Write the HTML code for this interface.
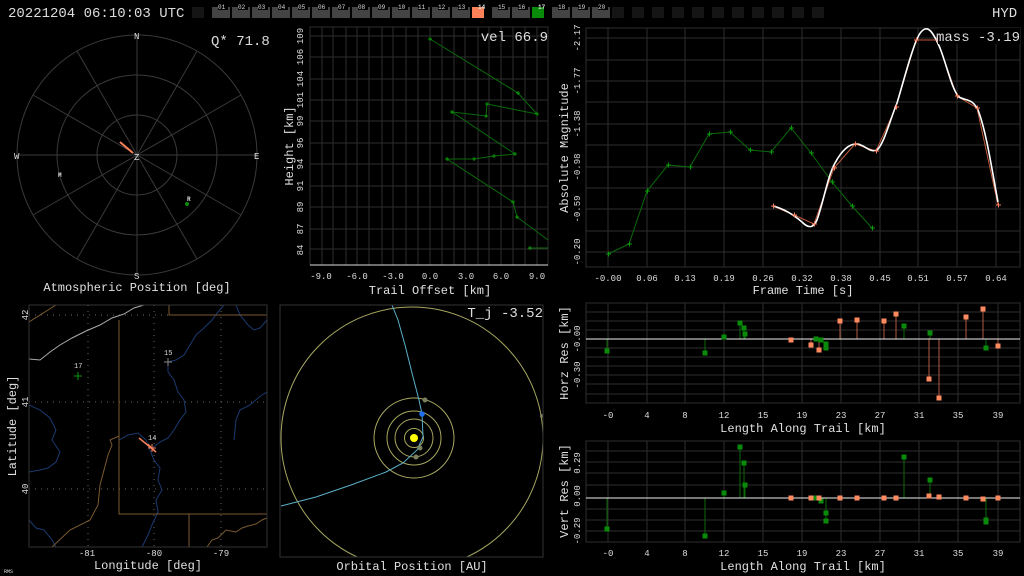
<!DOCTYPE html>
<html><head><meta charset="utf-8"><style>
html,body{margin:0;padding:0;background:#000;width:1024px;height:576px;overflow:hidden}
svg{display:block}
text{font-family:"Liberation Mono",monospace;fill:#ddd}
.t{font-size:9px;fill:#bbb}
.ax{font-size:12px;fill:#e0e0e0}
.g{stroke:#2e2e2e;stroke-width:1;fill:none}
</style></head><body>
<svg width="1024" height="576" viewBox="0 0 1024 576" xmlns="http://www.w3.org/2000/svg">
<rect width="1024" height="576" fill="#000"/>
<text x="8" y="17" font-size="14" fill="#e8e8e8">20221204 06:10:03 UTC</text>
<text x="992" y="17" font-size="14" fill="#e8e8e8">HYD</text>
<g id="boxes">
<rect x="192" y="7" width="12" height="11" fill="#151515"/>
<rect x="212" y="7" width="18" height="11" fill="#444"/><rect x="218" y="3" width="10" height="7" fill="#000"/><text x="218" y="9" font-size="6">01</text>
<rect x="232" y="7" width="18" height="11" fill="#444"/><rect x="238" y="3" width="10" height="7" fill="#000"/><text x="238" y="9" font-size="6">02</text>
<rect x="252" y="7" width="18" height="11" fill="#444"/><rect x="258" y="3" width="10" height="7" fill="#000"/><text x="258" y="9" font-size="6">03</text>
<rect x="272" y="7" width="18" height="11" fill="#444"/><rect x="278" y="3" width="10" height="7" fill="#000"/><text x="278" y="9" font-size="6">04</text>
<rect x="292" y="7" width="18" height="11" fill="#444"/><rect x="298" y="3" width="10" height="7" fill="#000"/><text x="298" y="9" font-size="6">05</text>
<rect x="312" y="7" width="18" height="11" fill="#444"/><rect x="318" y="3" width="10" height="7" fill="#000"/><text x="318" y="9" font-size="6">06</text>
<rect x="332" y="7" width="18" height="11" fill="#444"/><rect x="338" y="3" width="10" height="7" fill="#000"/><text x="338" y="9" font-size="6">07</text>
<rect x="352" y="7" width="18" height="11" fill="#444"/><rect x="358" y="3" width="10" height="7" fill="#000"/><text x="358" y="9" font-size="6">08</text>
<rect x="372" y="7" width="18" height="11" fill="#444"/><rect x="378" y="3" width="10" height="7" fill="#000"/><text x="378" y="9" font-size="6">09</text>
<rect x="392" y="7" width="18" height="11" fill="#444"/><rect x="398" y="3" width="10" height="7" fill="#000"/><text x="398" y="9" font-size="6">10</text>
<rect x="412" y="7" width="18" height="11" fill="#444"/><rect x="418" y="3" width="10" height="7" fill="#000"/><text x="418" y="9" font-size="6">11</text>
<rect x="432" y="7" width="18" height="11" fill="#444"/><rect x="438" y="3" width="10" height="7" fill="#000"/><text x="438" y="9" font-size="6">12</text>
<rect x="452" y="7" width="18" height="11" fill="#444"/><rect x="458" y="3" width="10" height="7" fill="#000"/><text x="458" y="9" font-size="6">13</text>
<rect x="472" y="7" width="12" height="11" fill="#f98058"/><text x="478" y="9" font-size="6" fill="#fff" font-weight="bold">14</text>
<rect x="492" y="7" width="18" height="11" fill="#444"/><rect x="498" y="3" width="10" height="7" fill="#000"/><text x="498" y="9" font-size="6">15</text>
<rect x="512" y="7" width="18" height="11" fill="#444"/><rect x="518" y="3" width="10" height="7" fill="#000"/><text x="518" y="9" font-size="6">16</text>
<rect x="532" y="7" width="12" height="11" fill="#0a8a0a"/><text x="538" y="9" font-size="6" fill="#fff" font-weight="bold">17</text>
<rect x="552" y="7" width="18" height="11" fill="#444"/><rect x="558" y="3" width="10" height="7" fill="#000"/><text x="558" y="9" font-size="6">18</text>
<rect x="572" y="7" width="18" height="11" fill="#444"/><rect x="578" y="3" width="10" height="7" fill="#000"/><text x="578" y="9" font-size="6">19</text>
<rect x="592" y="7" width="18" height="11" fill="#444"/><rect x="598" y="3" width="10" height="7" fill="#000"/><text x="598" y="9" font-size="6">20</text>
<g fill="#151515"><rect x="612" y="7" width="12" height="11"/><rect x="632" y="7" width="12" height="11"/><rect x="652" y="7" width="12" height="11"/><rect x="672" y="7" width="12" height="11"/><rect x="692" y="7" width="12" height="11"/><rect x="712" y="7" width="12" height="11"/><rect x="732" y="7" width="12" height="11"/><rect x="752" y="7" width="12" height="11"/><rect x="772" y="7" width="12" height="11"/><rect x="792" y="7" width="12" height="11"/><rect x="812" y="7" width="12" height="11"/></g>
</g>

<!-- Polar -->
<g stroke="#3a3a3a" fill="none">
<circle cx="137" cy="155" r="40"/><circle cx="137" cy="155" r="80"/><circle cx="137" cy="155" r="120"/>
<line x1="137" y1="35" x2="137" y2="275"/><line x1="17" y1="155" x2="257" y2="155"/>
<line x1="77" y1="51" x2="197" y2="259"/><line x1="197" y1="51" x2="77" y2="259"/>
<line x1="33" y1="95" x2="241" y2="215"/><line x1="241" y1="95" x2="33" y2="215"/>
</g>
<g font-size="9" fill="#ccc"><text x="134" y="39">N</text><text x="134" y="279">S</text><text x="14" y="159">W</text><text x="254" y="159">E</text><text x="134" y="160">Z</text></g>
<line x1="120" y1="142" x2="133" y2="153" stroke="#f98058" stroke-width="2"/>
<text x="58" y="177" font-size="6" fill="#fff" font-weight="bold">M</text>
<text x="187" y="201" font-size="6" fill="#fff" font-weight="bold">R</text>
<circle cx="187" cy="204" r="2" fill="#0a8a0a"/>
<text x="211" y="45" font-size="14">Q* 71.8</text>
<text x="137" y="291" class="ax" text-anchor="middle">Atmospheric Position [deg]</text>

<!-- Height plot -->
<g class="g">
<rect x="310" y="27" width="238" height="238"/>
<path d="M322 27V265M333 27V265M346 27V265M357 27V265M369 27V265M382 27V265M393 27V265M406 27V265M418 27V265M430 27V265M442 27V265M454 27V265M465 27V265M478 27V265M489 27V265M501 27V265M513 27V265M525 27V265M537 27V265"/>
<path d="M310 36H548M310 57H548M310 79H548M310 100H548M310 121H548M310 143H548M310 164H548M310 186H548M310 207H548M310 229H548M310 249H548"/>
</g>
<line x1="310" y1="265" x2="548" y2="265" stroke="#ddd"/>
<g class="t" text-anchor="middle">
<text x="321" y="279">-9.0</text><text x="357" y="279">-6.0</text><text x="393" y="279">-3.0</text><text x="430" y="279">0.0</text><text x="466" y="279">3.0</text><text x="501" y="279">6.0</text><text x="537" y="279">9.0</text>
</g>
<g class="t" text-anchor="middle">
<text transform="translate(303,36) rotate(-90)">109</text><text transform="translate(303,57) rotate(-90)">106</text><text transform="translate(303,79) rotate(-90)">104</text><text transform="translate(303,100) rotate(-90)">101</text><text transform="translate(303,121) rotate(-90)">99</text><text transform="translate(303,143) rotate(-90)">96</text><text transform="translate(303,164) rotate(-90)">94</text><text transform="translate(303,186) rotate(-90)">91</text><text transform="translate(303,207) rotate(-90)">89</text><text transform="translate(303,229) rotate(-90)">87</text><text transform="translate(303,250) rotate(-90)">84</text>
</g>
<text transform="translate(293,146) rotate(-90)" class="ax" text-anchor="middle">Height [km]</text>
<text x="430" y="294" class="ax" text-anchor="middle">Trail Offset [km]</text>
<polyline fill="none" stroke="#0a6a0a" points="430,39 518,93 537,114 487,104 486,116 452,112 515,154 494,156 474,159 447,159 513,202 517,217 548,240"/>
<line x1="530" y1="248" x2="548" y2="248" stroke="#0a6a0a"/>
<g stroke="#0a9a0a" stroke-width="1">
<path d="M428 39h4M430 37v4M516 93h4M518 91v4M535 114h4M537 112v4M485 104h4M487 102v4M484 116h4M486 114v4M450 112h4M452 110v4M513 154h4M515 152v4M492 156h4M494 154v4M472 159h4M474 157v4M445 159h4M447 157v4M511 202h4M513 200v4M515 217h4M517 215v4M528 248h4M530 246v4"/>
</g>
<text x="548" y="41" font-size="14" text-anchor="end">vel 66.9</text>

<!-- Magnitude plot -->
<g class="g">
<rect x="586" y="28" width="434" height="239"/>
<path d="M608 28V267M647 28V267M685 28V267M724 28V267M763 28V267M802 28V267M841 28V267M880 28V267M918 28V267M957 28V267M996 28V267"/>
<path d="M586 38H1020M586 60H1020M586 81H1020M586 102H1020M586 124H1020M586 145H1020M586 167H1020M586 188H1020M586 209H1020M586 231H1020M586 252H1020"/>
</g>
<g class="t" text-anchor="middle">
<text x="608" y="281">-0.00</text><text x="647" y="281">0.06</text><text x="685" y="281">0.13</text><text x="724" y="281">0.19</text><text x="763" y="281">0.26</text><text x="802" y="281">0.32</text><text x="841" y="281">0.38</text><text x="880" y="281">0.45</text><text x="918" y="281">0.51</text><text x="957" y="281">0.57</text><text x="996" y="281">0.64</text>
<text transform="translate(580,38) rotate(-90)">-2.17</text><text transform="translate(580,81) rotate(-90)">-1.77</text><text transform="translate(580,124) rotate(-90)">-1.38</text><text transform="translate(580,167) rotate(-90)">-0.98</text><text transform="translate(580,209) rotate(-90)">-0.59</text><text transform="translate(580,252) rotate(-90)">-0.20</text>
</g>
<text transform="translate(568,148) rotate(-90)" class="ax" text-anchor="middle">Absolute Magnitude</text>
<text x="803" y="294" class="ax" text-anchor="middle">Frame Time [s]</text>
<polyline fill="none" stroke="#0a6a0a" points="608,254 629,244 647,191 668,165 690,167 709,134 730,132 750,150 771,152 791,128 811,153 832,182 852,206 872,228"/>
<g stroke="#0a9a0a"><path d="M606 254h5M608.5 251.5v5M627 244h5M629.5 241.5v5M645 191h5M647.5 188.5v5M666 165h5M668.5 162.5v5M688 167h5M690.5 164.5v5M707 134h5M709.5 131.5v5M728 132h5M730.5 129.5v5M748 150h5M750.5 147.5v5M769 152h5M771.5 149.5v5M789 128h5M791.5 125.5v5M809 153h5M811.5 150.5v5M830 182h5M832.5 179.5v5M850 206h5M852.5 203.5v5M870 228h5M872.5 225.5v5"/></g>
<polyline fill="none" stroke="#c05a3a" points="773,206 794,215 814,224 834,168 855,144 876,151 896,107 916,40 937,40 957,96 977,108 998,205"/>
<path fill="none" stroke="#fff" stroke-width="1.6" d="M773,206 C785,209 795,216 802,222 C808,228 813,229 817,220 C824,200 828,175 835,163 C842,150 850,143 858,144 C866,146 870,153 877,150 C884,144 890,120 897,103 C904,80 914,40 921,32 C928,24 933,32 940,48 C947,66 952,90 959,97 C966,101 972,98 978,110 C986,130 992,170 998,202"/>
<g stroke="#ff8060"><path d="M771 206h5M773.5 203.5v5M792 215h5M794.5 212.5v5M812 224h5M814.5 221.5v5M832 168h5M834.5 165.5v5M853 144h5M855.5 141.5v5M874 151h5M876.5 148.5v5M894 107h5M896.5 104.5v5M914 40h5M916.5 37.5v5M935 40h5M937.5 37.5v5M955 96h5M957.5 93.5v5M975 108h5M977.5 105.5v5M996 205h5M998.5 202.5v5"/></g>
<rect x="938" y="28" width="82" height="16" fill="#000"/>
<text x="1020" y="41" font-size="14" text-anchor="end">mass -3.19</text>

<!-- Horz res -->
<g class="g">
<rect x="586" y="303" width="434" height="100"/>
<path d="M608 303V403M647 303V403M685 303V403M724 303V403M763 303V403M802 303V403M841 303V403M880 303V403M919 303V403M958 303V403M998 303V403"/>
<path d="M586 312H1020M586 321H1020M586 330H1020M586 348H1020M586 357H1020M586 366H1020M586 375H1020M586 384H1020M586 394H1020"/>
</g>
<g class="t" text-anchor="middle">
<text x="608" y="418">-0</text><text x="647" y="418">4</text><text x="685" y="418">8</text><text x="724" y="418">12</text><text x="763" y="418">15</text><text x="802" y="418">19</text><text x="841" y="418">23</text><text x="880" y="418">27</text><text x="919" y="418">31</text><text x="958" y="418">35</text><text x="998" y="418">39</text>
<text transform="translate(580,339) rotate(-90)">-0.00</text><text transform="translate(580,375) rotate(-90)">-0.30</text>
</g>
<text transform="translate(568,353) rotate(-90)" class="ax" text-anchor="middle">Horz Res [km]</text>
<text x="803" y="432" class="ax" text-anchor="middle">Length Along Trail [km]</text>
<g stroke="#0a6a0a"><path d="M607 339V351M705 339V353M724 339V337M740 339V323M744 339V328M745 339V334M904 339V326M930 339V333M986 339V348"/></g>
<g stroke="#b05a40"><path d="M811 339V345M819 339V350M840 339V321M857 339V320M884 339V321M896 339V314M929 339V379M939 339V398M966 339V317M983 339V309M998 339V346"/></g>
<line x1="586" y1="339" x2="1020" y2="339" stroke="#eee"/>
<g fill="#0a8a0a"><rect x="604.5" y="348.5" width="5" height="5"/><rect x="702.5" y="350.5" width="5" height="5"/><rect x="721.5" y="334.5" width="5" height="5"/><rect x="737.5" y="320.5" width="5" height="5"/><rect x="741.5" y="325.5" width="5" height="5"/><rect x="742.5" y="331.5" width="5" height="5"/><rect x="813.5" y="336.5" width="5" height="5"/><rect x="818.5" y="337.5" width="5" height="5"/><rect x="823.5" y="341.5" width="5" height="5"/><rect x="823.5" y="345.5" width="5" height="5"/><rect x="901.5" y="323.5" width="5" height="5"/><rect x="927.5" y="330.5" width="5" height="5"/><rect x="983.5" y="345.5" width="5" height="5"/></g>
<g fill="#ff8a60"><rect x="788.5" y="337.5" width="5" height="5"/><rect x="808.5" y="342.5" width="5" height="5"/><rect x="816.5" y="347.5" width="5" height="5"/><rect x="837.5" y="318.5" width="5" height="5"/><rect x="854.5" y="317.5" width="5" height="5"/><rect x="881.5" y="318.5" width="5" height="5"/><rect x="893.5" y="311.5" width="5" height="5"/><rect x="926.5" y="376.5" width="5" height="5"/><rect x="936.5" y="395.5" width="5" height="5"/><rect x="963.5" y="314.5" width="5" height="5"/><rect x="980.5" y="306.5" width="5" height="5"/><rect x="995.5" y="343.5" width="5" height="5"/></g>

<!-- Vert res -->
<g class="g">
<rect x="586" y="441" width="434" height="101"/>
<path d="M608 441V542M647 441V542M685 441V542M724 441V542M763 441V542M802 441V542M841 441V542M880 441V542M919 441V542M958 441V542M998 441V542"/>
<path d="M586 451H1020M586 462H1020M586 473H1020M586 485H1020M586 509H1020M586 520H1020M586 531H1020"/>
</g>
<g class="t" text-anchor="middle">
<text x="608" y="556">-0</text><text x="647" y="556">4</text><text x="685" y="556">8</text><text x="724" y="556">12</text><text x="763" y="556">15</text><text x="802" y="556">19</text><text x="841" y="556">23</text><text x="880" y="556">27</text><text x="919" y="556">31</text><text x="958" y="556">35</text><text x="998" y="556">39</text>
<text transform="translate(580,463) rotate(-90)">0.29</text><text transform="translate(580,496) rotate(-90)">0.00</text><text transform="translate(580,531) rotate(-90)">-0.29</text>
</g>
<text transform="translate(568,491) rotate(-90)" class="ax" text-anchor="middle">Vert Res [km]</text>
<text x="803" y="570" class="ax" text-anchor="middle">Length Along Trail [km]</text>
<g stroke="#0a6a0a"><path d="M607 498V529M705 498V536M724 498V493M740 498V447M744 498V463M745 498V485M826 498V521M904 498V457M930 498V480M986 498V521"/></g>
<line x1="586" y1="498" x2="1020" y2="498" stroke="#eee"/>
<g fill="#0a8a0a"><rect x="604.5" y="526.5" width="5" height="5"/><rect x="702.5" y="533.5" width="5" height="5"/><rect x="721.5" y="490.5" width="5" height="5"/><rect x="737.5" y="444.5" width="5" height="5"/><rect x="741.5" y="460.5" width="5" height="5"/><rect x="742.5" y="482.5" width="5" height="5"/><rect x="813.5" y="495.5" width="5" height="5"/><rect x="818.5" y="498.5" width="5" height="5"/><rect x="823.5" y="510.5" width="5" height="5"/><rect x="823.5" y="518.5" width="5" height="5"/><rect x="901.5" y="454.5" width="5" height="5"/><rect x="927.5" y="477.5" width="5" height="5"/><rect x="983.5" y="517.5" width="5" height="7"/></g>
<g fill="#ff8a60"><rect x="788.5" y="495.5" width="5" height="5"/><rect x="808.5" y="495.5" width="5" height="5"/><rect x="816.5" y="495.5" width="5" height="5"/><rect x="837.5" y="495.5" width="5" height="5"/><rect x="854.5" y="495.5" width="5" height="5"/><rect x="881.5" y="495.5" width="5" height="5"/><rect x="893.5" y="495.5" width="5" height="5"/><rect x="926.5" y="493.5" width="5" height="5"/><rect x="936.5" y="494.5" width="5" height="5"/><rect x="963.5" y="495.5" width="5" height="5"/><rect x="980.5" y="496.5" width="5" height="5"/><rect x="995.5" y="495.5" width="5" height="5"/></g>

<!-- Map -->
<defs><clipPath id="mc"><rect x="29" y="305" width="238" height="242"/></clipPath><clipPath id="oc"><rect x="280" y="305" width="263" height="252"/></clipPath></defs>
<g clip-path="url(#mc)">
<g stroke="#666" stroke-dasharray="1,5" fill="none"><path d="M29 315H267M29 402H267M29 489H267M88 305V547M154 305V547M221 305V547"/></g>
<g stroke="#1c3a70" fill="none">
<path d="M29 405 L40 410 L50 418 L56 430 L52 440 L60 452 L56 462 L48 468 L40 470 L29 472"/>
<path d="M119 440 L128 435 L138 433 L146 440 L150 450 L154 460 L160 468 L158 480 L162 490 L156 500 L158 512 L152 525 L148 535 L142 547"/>
<path d="M152 448 L160 442 L168 438 L174 430 L180 420 L186 412 L184 400 L178 392 L174 380 L168 372 L168 362 L176 360 L184 355 L190 345 L196 335 L204 328 L212 320 L218 312 L224 305"/>
<path d="M236 305 L240 315 L248 325 L254 330 L260 328 L267 320"/>
<path d="M234 440 L236 420 L240 410 L250 405 L258 398 L262 395 L267 392"/>
<path d="M29 520 L36 528 L44 530 L52 540 L56 547"/>
</g>
<g stroke="#7a5a30" fill="none">
<path d="M119 320 V514 H267"/><path d="M169 305 V315 H267"/><path d="M189 514 V547"/>
<path d="M29 322 L56 305"/>
<path d="M52 547 L70 530 L90 520 L98 505 L100 485 L104 470 L108 455 L112 445 L110 440 L119 436"/>
<path d="M207 547 L212 540 L218 538 L226 530 L236 532 L242 528 L248 526 L256 524 L262 520 L267 518"/>
</g>
<path d="M29 359 L40 360 L50 352 L60 345 L72 338 L86 331 L100 325 L112 318 L124 314 L134 308 L144 305" stroke="#aaa" fill="none"/>
</g>
<rect x="29" y="305" width="238" height="242" fill="none" stroke="#333"/>
<g stroke="#0a9a0a"><path d="M74 376h8M78 372v8"/></g>
<text x="74" y="368" font-size="7" fill="#aaa">17</text>
<g stroke="#888"><path d="M164 362h8M168 358v8"/></g>
<text x="164" y="355" font-size="7" fill="#aaa">15</text>
<line x1="139" y1="438" x2="156" y2="452" stroke="#f98058" stroke-width="1.5"/>
<g stroke="#f98058"><path d="M148 448h8M152 444v8M148 444l8 8"/></g>
<text x="148" y="440" font-size="7" fill="#aaa">14</text>
<g class="t" text-anchor="middle"><text x="87" y="556">-81</text><text x="154" y="556">-80</text><text x="221" y="556">-79</text>
<text transform="translate(28,315) rotate(-90)">42</text><text transform="translate(28,402) rotate(-90)">41</text><text transform="translate(28,489) rotate(-90)">40</text></g>
<text transform="translate(16,426) rotate(-90)" class="ax" text-anchor="middle">Latitude [deg]</text>
<text x="148" y="569" class="ax" text-anchor="middle">Longitude [deg]</text>

<!-- Orbit -->
<g clip-path="url(#oc)">
<g stroke="#a8a860" fill="none">
<circle cx="414" cy="438" r="9.5"/><circle cx="414" cy="438" r="19"/><circle cx="414" cy="438" r="27"/><circle cx="414" cy="438" r="40"/><circle cx="412" cy="438" r="131"/>
</g>
<polyline fill="none" stroke="#5ab0c8" points="392,305 398,320 405,345 412,373 419,400 422,414 423,437 417,450 403,463 386,472 351,485 316,497 281,506"/>
<circle cx="414" cy="438" r="4" fill="#ffff00"/>
<g fill="#7a8060"><circle cx="425" cy="400" r="2.5"/><circle cx="420" cy="448" r="2.5"/><circle cx="416" cy="457" r="2.5"/><circle cx="542" cy="416" r="2"/></g>
<circle cx="422" cy="414" r="2.8" fill="#1e6ef0"/>
</g>
<rect x="280" y="305" width="263" height="252" fill="none" stroke="#333"/>
<text x="543" y="317" font-size="14" text-anchor="end">T_j -3.52</text>
<text x="412" y="570" class="ax" text-anchor="middle">Orbital Position [AU]</text>
<text x="4" y="573" font-size="5" fill="#555">RMS</text>
</svg>
</body></html>
